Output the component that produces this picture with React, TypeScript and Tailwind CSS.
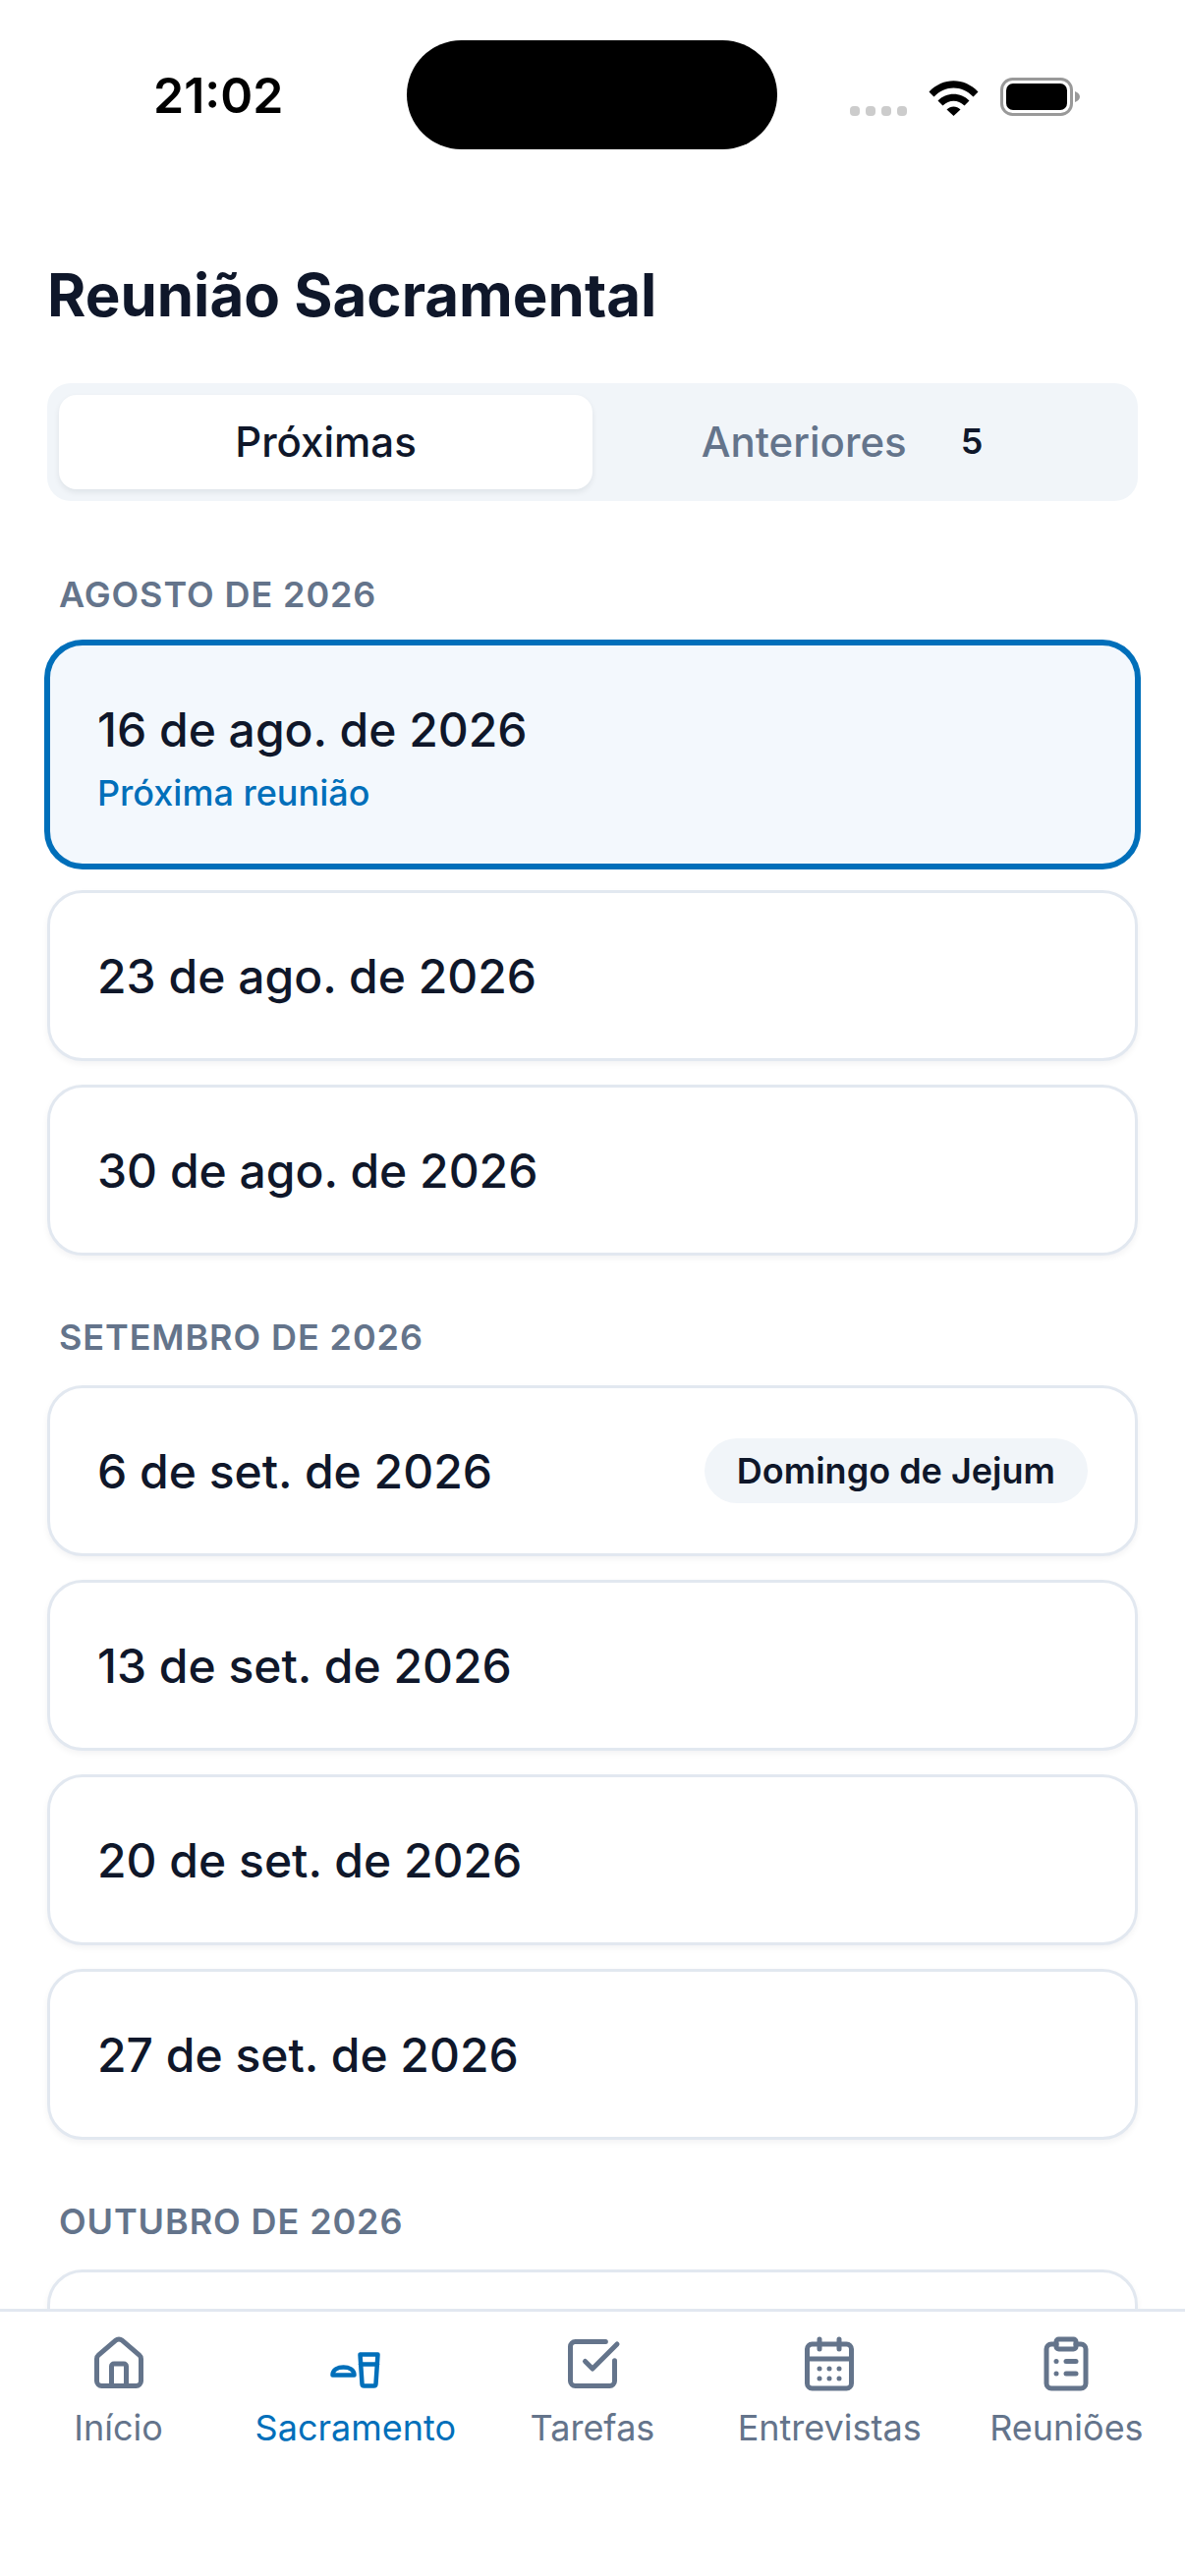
import { CalendarDays, ClipboardList, House, SquareCheckBig } from "lucide-react";
import type { ReactNode } from "react";

const cardClass =
  "flex h-[174px] items-center justify-between rounded-[36px] border-[3px] border-[#e2e8f0] bg-white px-[48px] shadow-[0_3px_6px_rgba(15,23,42,0.05)]";
const dateClass = "mt-[2px] text-[48px] leading-[60px] font-medium text-[#0f172a]";
const sectionClass =
  "px-[12px] text-[36px] leading-[48px] font-semibold tracking-[0.9px] text-[#64748b]";

function StatusBar() {
  return (
    <div className="flex items-center pt-[41px] pl-[156px]">
      <span className="w-[258px] text-[50px] leading-[60px] font-semibold text-black">21:02</span>
      <div className="h-[111px] w-[377px] rounded-full bg-black" />
      <div className="ml-[74px] flex items-end gap-[22px] pt-[4px]">
        <div className="flex gap-[6px]">
          <span className="h-[10px] w-[10px] rounded-[4px] bg-[#cccccc]" />
          <span className="h-[10px] w-[10px] rounded-[4px] bg-[#cccccc]" />
          <span className="h-[10px] w-[10px] rounded-[4px] bg-[#cccccc]" />
          <span className="h-[10px] w-[10px] rounded-[4px] bg-[#cccccc]" />
        </div>
        <svg width="51" height="37" viewBox="0 0 51 37">
          <path d="M0.5 12.5C14.5 -2.5 36.5 -2.5 50.5 12.5L45.5 17.5C34 5.5 17 5.5 5.5 17.5Z" fill="#000" />
          <path d="M9.5 21.5C18 12.5 33 12.5 41.5 21.5L36.5 26.5C30 20 21 20 14.5 26.5Z" fill="#000" />
          <path d="M18.5 30.5C22.5 26.5 28.5 26.5 32.5 30.5L25.5 37Z" fill="#000" />
        </svg>
        <svg width="82" height="39" viewBox="0 0 82 39">
          <rect x="1.5" y="1.5" width="71" height="36" rx="11" fill="none" stroke="#999999" strokeWidth="3" />
          <rect x="6" y="6" width="62" height="27" rx="7" fill="#000" />
          <path d="M76 14C79 15 81 17 81 19.500C81 22 79 24 76 25Z" fill="#999999" />
        </svg>
      </div>
    </div>
  );
}

function DateCard({ label, children }: { label: string; children?: ReactNode }) {
  return (
    <div className={cardClass}>
      <span className={dateClass}>{label}</span>
      {children}
    </div>
  );
}

function SacramentIcon() {
  return (
    <svg width="60" height="60" viewBox="2 0 60 60" fill="none" stroke="#006fba" strokeWidth="4.5" strokeLinejoin="round" strokeLinecap="round">
      <path d="M8.500 41.500C8.500 36 14 33.500 19.500 33.500C25 33.500 30.500 36 30.500 41.500Z" />
      <path d="M36.500 20.500H54.500L52.500 50.500C52.400 52 51.500 52.500 50.500 52.500H40.500C39.500 52.500 38.600 52 38.500 50.500Z" />
      <path d="M37 30.500H54" />
    </svg>
  );
}

function NavItem({ icon, label, active }: { icon: ReactNode; label: string; active?: boolean }) {
  return (
    <div className="flex flex-col items-center">
      {icon}
      <span className={active ? "mt-[13px] text-[36px] leading-[44px] text-[#006fba]" : "mt-[13px] text-[36px] leading-[44px] text-[#64748b]"}>
        {label}
      </span>
    </div>
  );
}

export default function App() {
  return (
    <div className="flex h-[2622px] w-[1206px] flex-col overflow-hidden bg-white font-['Inter',sans-serif]">
      <StatusBar />
      <main className="min-h-0 flex-1 overflow-hidden px-[48px]">
        <h1 className="mt-[112px] text-[60px] leading-[72px] font-bold text-[#0f172a]">Reunião Sacramental</h1>

        <div className="mt-[54px] grid h-[120px] grid-cols-2 rounded-[24px] bg-[#f1f5f9] p-[12px]">
          <div className="flex items-center justify-center rounded-[18px] bg-white pb-[2px] text-[42px] font-medium text-[#0f172a] shadow-[0_3px_6px_rgba(15,23,42,0.08)]">
            Próximas
          </div>
          <div className="flex items-center justify-center pr-[35px] pb-[2px] text-[42px] font-medium text-[#64748b]">
            Anteriores
            <span className="ml-[55px] text-[36px] font-semibold text-[#0f172a]">5</span>
          </div>
        </div>

        <h2 className={`mt-[71px] ${sectionClass}`}>AGOSTO DE 2026</h2>
        <div className="mt-[25px] flex flex-col gap-[24px]">
          <div className="flex h-[228px] flex-col justify-center rounded-[36px] border-[3px] border-[#006fba] bg-[#f3f8fd] px-[48px] pt-[3px] shadow-[0_0_0_3px_#006fba]">
            <span className={dateClass}>16 de ago. de 2026</span>
            <span className="mt-[12px] text-[36px] leading-[44px] font-medium text-[#006fba]">Próxima reunião</span>
          </div>
          <DateCard label="23 de ago. de 2026" />
          <DateCard label="30 de ago. de 2026" />
        </div>

        <h2 className={`mt-[59px] ${sectionClass}`}>SETEMBRO DE 2026</h2>
        <div className="mt-[25px] flex flex-col gap-[24px]">
          <DateCard label="6 de set. de 2026">
            <span className="flex h-[66px] items-center rounded-full bg-[#f1f5f9] px-[33px] text-[36px] font-semibold text-[#0f172a]">
              Domingo de Jejum
            </span>
          </DateCard>
          <DateCard label="13 de set. de 2026" />
          <DateCard label="20 de set. de 2026" />
          <DateCard label="27 de set. de 2026" />
        </div>

        <h2 className={`mt-[59px] ${sectionClass}`}>OUTUBRO DE 2026</h2>
        <div className="mt-[25px] flex flex-col gap-[24px]">
          <div className={cardClass} />
        </div>
      </main>

      <nav className="grid h-[272px] shrink-0 grid-cols-5 border-t-[3px] border-[#e2e8f0] bg-white pt-[23px]">
        <NavItem label="Início" icon={<House size={60} color="#64748b" strokeWidth={2} />} />
        <NavItem label="Sacramento" active icon={<SacramentIcon />} />
        <NavItem label="Tarefas" icon={<SquareCheckBig size={60} color="#64748b" strokeWidth={2} />} />
        <NavItem label="Entrevistas" icon={<CalendarDays size={60} color="#64748b" strokeWidth={2} />} />
        <NavItem label="Reuniões" icon={<ClipboardList size={60} color="#64748b" strokeWidth={2} />} />
      </nav>
    </div>
  );
}
